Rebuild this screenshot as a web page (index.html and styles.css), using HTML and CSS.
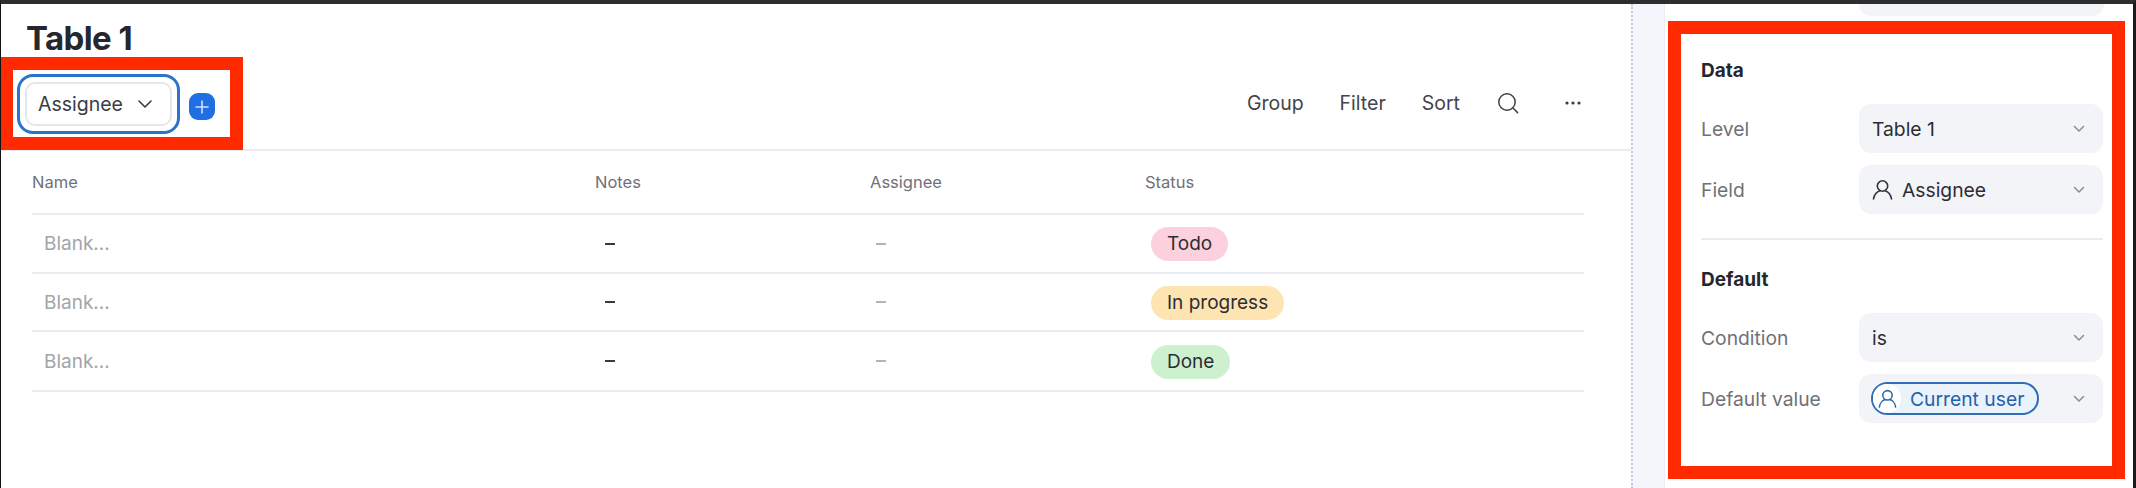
FILE: index.html
```html
<!DOCTYPE html>
<html lang="en">
<head>
<meta charset="utf-8">
<title>Table 1</title>
<link rel="stylesheet" href="styles.css">
</head>
<body>
<div class="window">
  <main class="main">
    <h1 class="title">Table 1</h1>
    <div class="toolbar">
      <div class="mark mark-left">
        <div class="focus-ring">
          <div class="tab-select">
            <span>Assignee</span>
            <svg class="tab-chev" width="16" height="10" viewBox="0 0 16 10"><path d="M2 2l6 6 6-6" fill="none" stroke="#3a3c44" stroke-width="1.6" stroke-linecap="round" stroke-linejoin="round"/></svg>
          </div>
        </div>
        <button class="add-btn" type="button" aria-label="Add">
          <svg width="16" height="16" viewBox="0 0 16 16"><path d="M8 2v12M2 8h12" stroke="#cfe2fb" stroke-width="1.6" stroke-linecap="round"/></svg>
        </button>
      </div>
      <div class="actions">
        <span class="act act-group">Group</span>
        <span class="act act-filter">Filter</span>
        <span class="act act-sort">Sort</span>
        <svg class="act-search" width="22" height="22" viewBox="0 0 22 22"><circle cx="10" cy="10" r="8.2" fill="none" stroke="#3f4148" stroke-width="1.5"/><path d="M16 16l4.6 4.6" stroke="#3f4148" stroke-width="1.5" stroke-linecap="round"/></svg>
        <svg class="act-more" width="16" height="4" viewBox="0 0 16 4"><circle cx="2" cy="2" r="1.6" fill="#3a3c44"/><circle cx="8" cy="2" r="1.6" fill="#3a3c44"/><circle cx="14" cy="2" r="1.6" fill="#3a3c44"/></svg>
      </div>
    </div>
    <div class="table">
      <div class="row row-head">
        <div class="th">Name</div><div class="th">Notes</div><div class="th">Assignee</div><div class="th">Status</div>
      </div>
      <div class="row row-1">
        <div class="blank">Blank...</div><div class="dash"></div><div class="dash dash-muted"></div>
        <div class="status"><span class="pill pill-todo">Todo</span></div>
      </div>
      <div class="row row-2">
        <div class="blank">Blank...</div><div class="dash"></div><div class="dash dash-muted"></div>
        <div class="status"><span class="pill pill-progress">In progress</span></div>
      </div>
      <div class="row row-3">
        <div class="blank">Blank...</div><div class="dash"></div><div class="dash dash-muted"></div>
        <div class="status"><span class="pill pill-done">Done</span></div>
      </div>
    </div>
  </main>
  <div class="band"></div>
  <aside class="panel">
    <div class="stub"></div>
    <div class="mark mark-right">
      <h2 class="section-title">Data</h2>
      <div class="field">
        <span class="label">Level</span>
        <div class="select"><span>Table 1</span>
          <svg class="chev" width="12" height="8" viewBox="0 0 12 8"><path d="M1.5 1.5L6 6l4.5-4.5" fill="none" stroke="#8a8d96" stroke-width="1.5" stroke-linecap="round" stroke-linejoin="round"/></svg>
        </div>
      </div>
      <div class="field">
        <span class="label">Field</span>
        <div class="select">
          <span class="with-icon">
            <svg width="21" height="21" viewBox="0 0 21 21"><circle cx="10.5" cy="7" r="5.2" fill="none" stroke="#33353c" stroke-width="1.6"/><path d="M1.5 20c.6-4.5 3.6-7.5 6-8M19.5 20c-.6-4.5-3.6-7.5-6-8" fill="none" stroke="#33353c" stroke-width="1.6" stroke-linecap="round"/></svg>
            Assignee
          </span>
          <svg class="chev" width="12" height="8" viewBox="0 0 12 8"><path d="M1.5 1.5L6 6l4.5-4.5" fill="none" stroke="#8a8d96" stroke-width="1.5" stroke-linecap="round" stroke-linejoin="round"/></svg>
        </div>
      </div>
      <hr class="divider">
      <h2 class="section-title">Default</h2>
      <div class="field">
        <span class="label">Condition</span>
        <div class="select"><span>is</span>
          <svg class="chev" width="12" height="8" viewBox="0 0 12 8"><path d="M1.5 1.5L6 6l4.5-4.5" fill="none" stroke="#8a8d96" stroke-width="1.5" stroke-linecap="round" stroke-linejoin="round"/></svg>
        </div>
      </div>
      <div class="field">
        <span class="label">Default value</span>
        <div class="select">
          <span class="user-pill">
            <span class="user-icon">
              <svg width="19" height="19" viewBox="0 0 21 21"><circle cx="10.5" cy="7" r="5.2" fill="none" stroke="#2a66ad" stroke-width="1.7"/><path d="M1.5 20c.6-4.5 3.6-7.5 6-8M19.5 20c-.6-4.5-3.6-7.5-6-8" fill="none" stroke="#2a66ad" stroke-width="1.7" stroke-linecap="round"/></svg>
            </span>
            Current user
          </span>
          <svg class="chev" width="12" height="8" viewBox="0 0 12 8"><path d="M1.5 1.5L6 6l4.5-4.5" fill="none" stroke="#8a8d96" stroke-width="1.5" stroke-linecap="round" stroke-linejoin="round"/></svg>
        </div>
      </div>
    </div>
  </aside>
</div>
</body>
</html>
```
FILE: styles.css
```css
* { box-sizing: border-box; }
html, body { margin: 0; padding: 0; }
body {
  width: 2136px;
  height: 488px;
  overflow: hidden;
  background: #fff;
  font-family: Inter, "Noto Sans", sans-serif;
  color: #2c2d33;
}
.window {
  display: flex;
  height: 488px;
  background: #fff;
  border-top: 4px solid #2e2e2e;
  border-left: 1px solid #111;
  border-right: 3px solid #1c1c1c;
  overflow: hidden;
}
.main { width: 1630px; flex: none; }
.title {
  margin: 0;
  height: 53px;
  padding: 16px 0 0 25px;
  font-size: 33px;
  line-height: 36px;
  font-weight: 700;
  letter-spacing: -0.6px;
  color: #26272d;
}
.toolbar {
  display: flex;
  justify-content: space-between;
  height: 94px;
  border-bottom: 2px solid #ececee;
}
.mark { border: 13px solid #ff2a00; background: #fff; }
.mark-left {
  width: 243px;
  height: 93px;
  margin-left: -1px;
  padding: 4px 0 0 4px;
  display: flex;
  align-items: flex-start;
}
.focus-ring {
  width: 163px;
  height: 60px;
  padding: 5px;
  border: 3px solid #2b74c6;
  border-radius: 16px;
}
.tab-select {
  height: 44px;
  display: flex;
  align-items: center;
  justify-content: space-between;
  padding: 0 17px 0 11px;
  border: 2px solid #e6e6e8;
  border-radius: 10px;
  font-size: 19.5px;
  color: #3a3c44;
}
.add-btn {
  width: 26px;
  height: 27px;
  margin: 19px 0 0 9px;
  padding: 0;
  display: flex;
  align-items: center;
  justify-content: center;
  background: #1f6fe3;
  border: 0;
  border-radius: 9px;
}
.actions {
  display: flex;
  align-items: center;
  height: 92px;
  padding: 0 50px 0 0;
  font-size: 19.5px;
  color: #43454c;
}
.act { display: block; margin-right: 36px; }
.act-sort { margin-right: 37px; }
.act-search { margin-right: 46px; }
.table { margin-left: 31px; width: 1552px; }
.row {
  display: grid;
  grid-template-columns: 563px 275px 275px 1fr;
  align-items: center;
  height: 59px;
  border-bottom: 2px solid #ececee;
}
.row-head { height: 64px; }
.row-2 { height: 58px; }
.row-3 { height: 60px; }
.th { font-size: 16.5px; color: #6f7178; }
.blank { padding-left: 12px; font-size: 19px; color: #a3a4a8; }
.dash { width: 10px; height: 2px; margin-left: 10px; background: #3a3a3f; }
.dash-muted { margin-left: 6px; background: #b3b4b8; }
.status { padding-top: 1px; }
.pill {
  display: inline-block;
  height: 34px;
  margin-left: 6px;
  padding: 0 16px;
  border-radius: 17px;
  font-size: 19px;
  line-height: 34px;
  color: #2c2d33;
}
.pill-todo { background: #fdd0dd; }
.pill-progress { background: #fde4b0; }
.pill-done { background: #cdf0cf; }
.band {
  width: 34px;
  flex: none;
  background: #f5f6fb;
  border-left: 2px dotted #c3c9e2;
  border-right: 1px solid #ececf2;
}
.panel { flex: 1; padding: 0 8px 0 3px; }
.stub {
  width: 245px;
  height: 12px;
  margin-left: 191px;
  background: #f3f4f8;
  border-radius: 0 0 12px 12px;
}
.mark-right {
  height: 458px;
  margin-top: 5px;
  padding: 0 9px 0 20px;
}
.section-title {
  margin: 0;
  height: 70px;
  padding-top: 25px;
  font-size: 19px;
  line-height: 24px;
  font-weight: 700;
  color: #26272d;
}
.field {
  display: flex;
  align-items: center;
  justify-content: space-between;
  margin-bottom: 12px;
}
.label { font-size: 19.3px; color: #6f7178; }
.select {
  width: 244px;
  height: 49px;
  display: flex;
  align-items: center;
  justify-content: space-between;
  padding: 0 18px 0 13px;
  background: #f3f4f8;
  border-radius: 12px;
  font-size: 19.3px;
  color: #2c2d33;
}
.with-icon { display: flex; align-items: center; gap: 9px; }
.divider {
  height: 2px;
  margin: 24px 0 0;
  border: 0;
  background: #ececee;
}
.divider + .section-title { height: 73px; padding-top: 28px; }
.user-pill {
  display: flex;
  align-items: center;
  gap: 9px;
  height: 33px;
  margin-left: -1px;
  padding-right: 13px;
  border: 2px solid #2f6db5;
  border-radius: 17px;
  background: #eaf2fc;
  color: #2361ab;
}
.user-icon {
  width: 28px;
  height: 29px;
  display: flex;
  align-items: center;
  justify-content: center;
  background: #fff;
  border-radius: 15px;
}
```
